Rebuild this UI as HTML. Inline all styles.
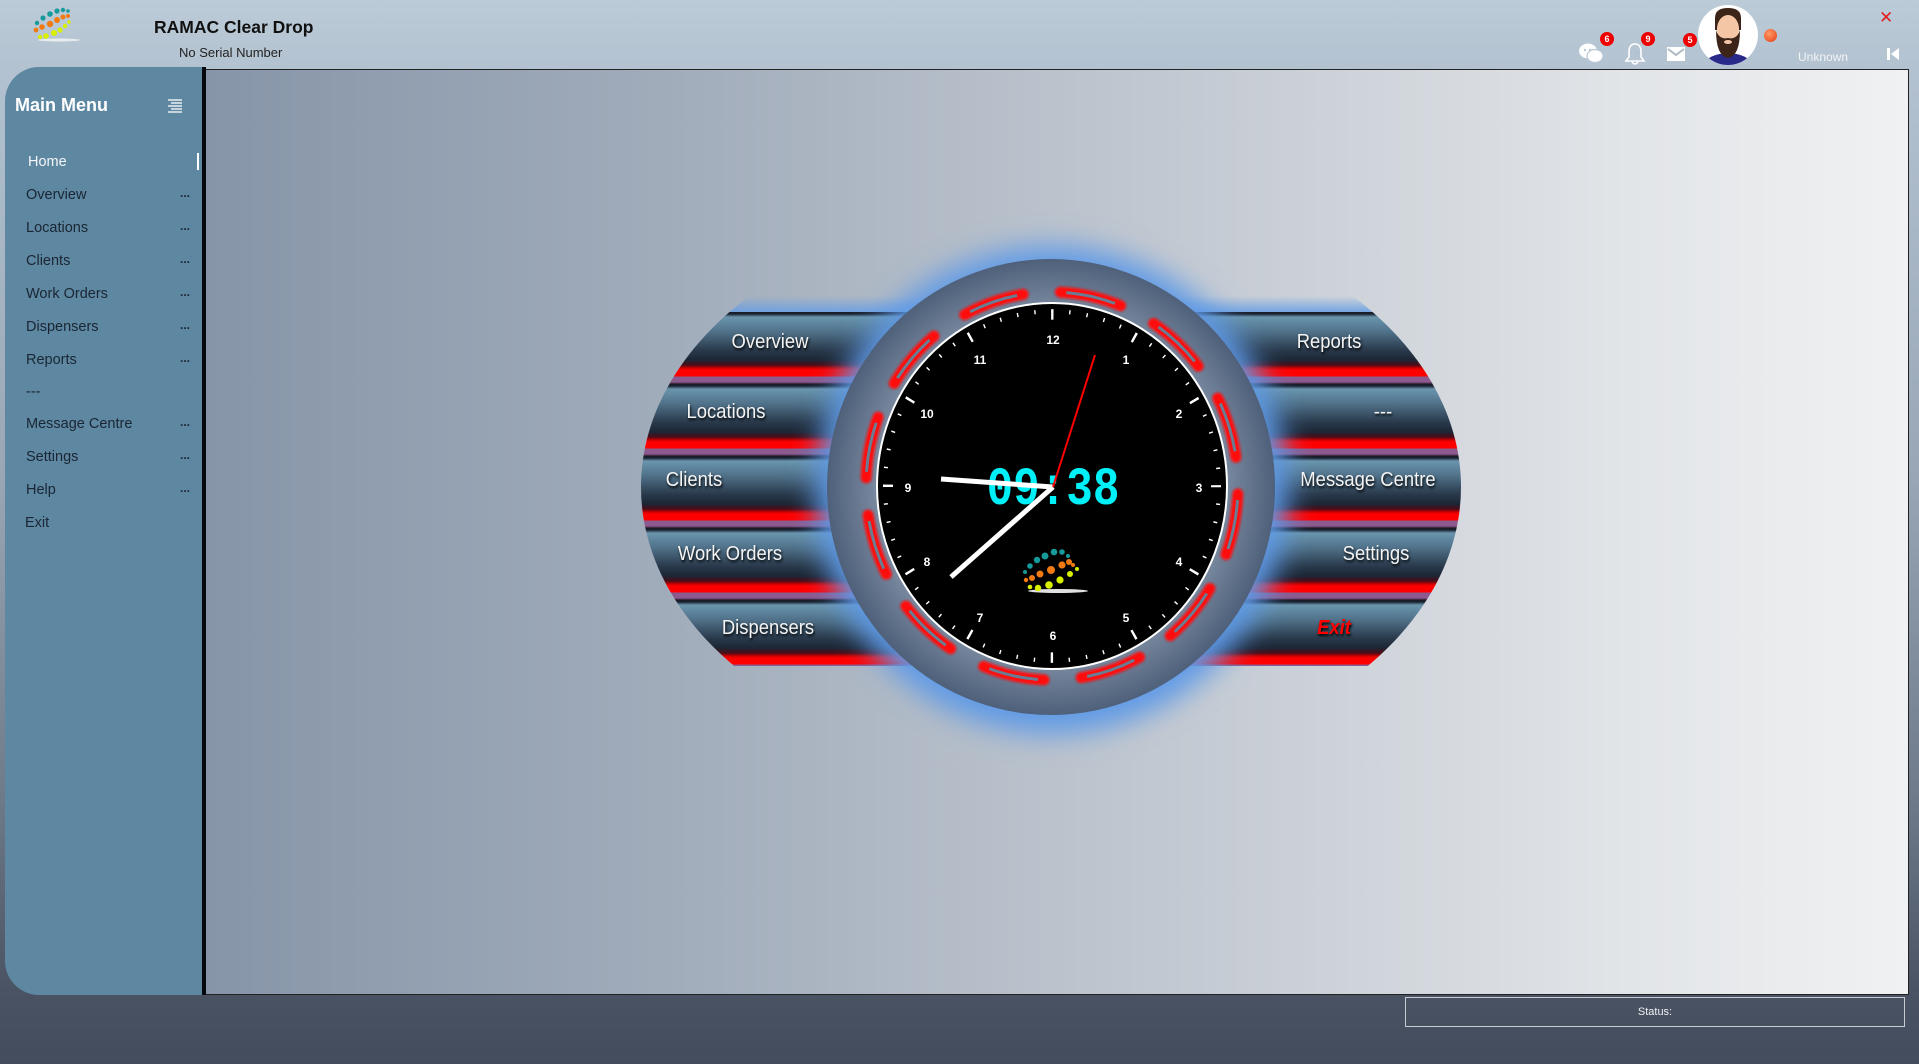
<!DOCTYPE html>
<html><head><meta charset="utf-8"><style>
*{margin:0;padding:0;box-sizing:border-box}
body{width:1919px;height:1064px;overflow:hidden;position:relative;font-family:"Liberation Sans",sans-serif;
background:linear-gradient(180deg,#bccbd8 0px,#b3c2d0 70px,#98a6b6 480px,#6e7a8a 800px,#4a5364 990px,#434c5d 1064px)}
.abs{position:absolute}
#side{left:5px;top:67px;width:201px;height:928px;background:#5e87a2;border-radius:34px 0 0 34px;border-right:4px solid #05080c}
#content{left:206px;top:69px;width:1703px;height:926px;border:1px solid #222;border-left:none;
background:linear-gradient(90deg,#8695a8 0%,#a4afbd 30%,#c6ccd4 60%,#e3e6e9 85%,#f0f1f2 100%)}
.mi{position:absolute;left:26px;font-size:14.5px;color:#1a2633}
.dots{position:absolute;left:180px;font-size:12px;color:#1a2633;font-weight:bold}
.band{position:absolute;left:600px;width:900px;height:72px;
background:linear-gradient(180deg,#161c28 0px,#1c2330 2px,#6a95ad 5px,#4f7088 20px,#2a3a4c 38px,#1c2634 48px,#4a0d18 53px,#c00 56px,#ff0000 58px,#ff0000 64px,#8c5a8e 65px,#8c5a8e 70px,#2a1a28 72px)}
.bt{position:absolute;color:#f4f4f4;font-size:20.5px;text-shadow:1px 2px 3px #000;transform:translateX(-50%) scaleX(.9);white-space:nowrap}
.badge{position:absolute;width:14px;height:14px;border-radius:7px;background:#e00;color:#fff;font-size:9px;font-weight:bold;text-align:center;line-height:14px}
</style></head><body>

<svg class="abs" style="left:28px;top:6px" width="56" height="40" viewBox="28 6 56 40">
<ellipse cx="59" cy="40" rx="21" ry="1.5" fill="#e8ecef"/>
<g fill="#169a9a"><circle cx="37" cy="23" r="2.2"/><circle cx="43" cy="18" r="2.6"/><circle cx="50" cy="14" r="2.8"/><circle cx="57" cy="11" r="2.6"/><circle cx="63" cy="10" r="2.2"/><circle cx="68" cy="11" r="1.8"/></g>
<g fill="#f27a12"><circle cx="36" cy="30" r="2.4"/><circle cx="42" cy="27" r="2.8"/><circle cx="50" cy="24" r="3.2"/><circle cx="57" cy="20" r="3"/><circle cx="63" cy="17" r="2.5"/><circle cx="68" cy="16" r="2"/></g>
<g fill="#d8f000"><circle cx="40" cy="37" r="2.2"/><circle cx="46" cy="36" r="2.8"/><circle cx="54" cy="33" r="3"/><circle cx="60" cy="30" r="2.6"/><circle cx="65" cy="26" r="2.2"/><circle cx="69" cy="22" r="1.7"/></g>
</svg>
<div class="abs" style="left:154px;top:17px;font-size:17.5px;font-weight:bold;color:#111">RAMAC Clear Drop</div>
<div class="abs" style="left:179px;top:45px;font-size:13px;color:#222">No Serial Number</div>

<svg class="abs" style="left:1578px;top:42px" width="28" height="24" viewBox="0 0 28 24">
<ellipse cx="10" cy="9" rx="9" ry="7.5" fill="#fff"/><ellipse cx="17" cy="14" rx="8" ry="6.5" fill="#fff" stroke="#b9c8d6" stroke-width="1.2"/>
<circle cx="7" cy="8" r="1.2" fill="#b9c8d6"/><circle cx="12" cy="8" r="1.2" fill="#b9c8d6"/></svg>
<div class="badge" style="left:1600px;top:32px">6</div>
<svg class="abs" style="left:1624px;top:42px" width="22" height="24" viewBox="0 0 22 24"><path d="M11 2 C6 2 5 6 5 10 L5 15 L2 19 L20 19 L17 15 L17 10 C17 6 16 2 11 2 Z" fill="none" stroke="#fff" stroke-width="1.6"/><path d="M8 20 Q11 24 14 20" fill="none" stroke="#fff" stroke-width="1.5"/></svg>
<div class="badge" style="left:1641px;top:32px">9</div>
<svg class="abs" style="left:1666px;top:46px" width="20" height="16" viewBox="0 0 20 16"><rect x="1" y="1" width="18" height="14" fill="#fff"/><path d="M2 3 L10 9 L18 3" fill="none" stroke="#aab6c2" stroke-width="1.8"/></svg>
<div class="badge" style="left:1683px;top:33px">5</div>
<svg class="abs" style="left:1697px;top:4px" width="62" height="62" viewBox="0 0 62 62">
<defs><clipPath id="av"><circle cx="31" cy="31" r="30"/></clipPath></defs>
<circle cx="31" cy="31" r="30" fill="#fff"/>
<g clip-path="url(#av)">
<path d="M6 62 Q10 50 31 49 Q52 50 56 62 Z" fill="#2a2a8a"/>
<path d="M18 14 Q18 4 31 4 Q44 4 44 14 L44 26 L18 26 Z" fill="#3d2418"/>
<ellipse cx="31" cy="25" rx="11" ry="14" fill="#f4c6a6"/>
<path d="M19 26 Q19 52 31 54 Q43 52 43 26 Q40 36 31 34 Q22 36 19 26 Z" fill="#3d2418"/>
<ellipse cx="31" cy="38" rx="4" ry="2" fill="#f4c6a6"/>
<path d="M19 12 Q25 8 31 10 Q37 8 43 12 L43 9 Q31 1 19 9 Z" fill="#3d2418"/>
</g></svg>
<div class="abs" style="left:1764px;top:29px;width:13px;height:13px;border-radius:50%;background:radial-gradient(circle at 40% 35%,#ff9a66,#e53a10)"></div>
<div class="abs" style="left:1798px;top:50px;font-size:12px;color:#f2f4f6">Unknown</div>
<div class="abs" style="left:1879px;top:8px;font-size:17px;color:#e02020">✕</div>
<svg class="abs" style="left:1886px;top:47px" width="14" height="14" viewBox="0 0 14 14"><rect x="1" y="1" width="3" height="12" fill="#fff"/><path d="M13 1 L5 7 L13 13 Z" fill="#fff"/></svg>

<div id="side" class="abs">
<div class="abs" style="left:10px;top:28px;font-size:18px;font-weight:bold;color:#fff">Main Menu</div>
<svg class="abs" style="left:162px;top:31px" width="16" height="16" viewBox="0 0 16 16"><g stroke="#fff" stroke-width="1.3"><line x1="1" y1="2" x2="15" y2="2"/><line x1="4" y1="5" x2="15" y2="5"/><line x1="1" y1="8" x2="15" y2="8"/><line x1="4" y1="11" x2="15" y2="11"/><line x1="1" y1="14" x2="15" y2="14"/></g></svg>
<div class="abs" style="left:192px;top:86px;width:2px;height:17px;background:#fff"></div>
</div>
<div class="mi" style="left:28px;top:154px;color:#f4f6f8">Home</div>
<div class="mi" style="top:187px">Overview</div><div class="dots" style="top:186px">...</div>
<div class="mi" style="top:220px">Locations</div><div class="dots" style="top:219px">...</div>
<div class="mi" style="top:253px">Clients</div><div class="dots" style="top:252px">...</div>
<div class="mi" style="top:286px">Work Orders</div><div class="dots" style="top:285px">...</div>
<div class="mi" style="top:319px">Dispensers</div><div class="dots" style="top:318px">...</div>
<div class="mi" style="top:352px">Reports</div><div class="dots" style="top:351px">...</div>
<div class="mi" style="top:384px">---</div>
<div class="mi" style="top:416px">Message Centre</div><div class="dots" style="top:415px">...</div>
<div class="mi" style="top:449px">Settings</div><div class="dots" style="top:448px">...</div>
<div class="mi" style="top:482px">Help</div><div class="dots" style="top:481px">...</div>
<div class="mi" style="top:515px;left:25px">Exit</div>

<div id="content" class="abs"></div>

<div class="abs" style="left:0;top:0;width:1919px;height:1064px;clip-path:ellipse(410px 282px at 1051px 487px)">
<div class="abs" style="left:600px;top:296px;width:900px;height:18px;background:linear-gradient(180deg,rgba(110,160,230,0),#6a9fe2)"></div>
<div class="band" style="top:312px"></div>
<div class="band" style="top:384px"></div>
<div class="band" style="top:456px"></div>
<div class="band" style="top:528px"></div>
<div class="band" style="top:600px;height:66px"></div>
</div>

<svg class="abs" style="left:600px;top:200px" width="900" height="580" viewBox="600 200 900 580">
<defs>
<filter id="bl" x="-30%" y="-30%" width="160%" height="160%"><feGaussianBlur stdDeviation="14"/></filter>
<filter id="rb" x="-10%" y="-10%" width="120%" height="120%"><feGaussianBlur stdDeviation="1.2"/></filter>
<radialGradient id="og" cx="50%" cy="50%" r="50%"><stop offset="0" stop-color="#9aaabd"/><stop offset=".75" stop-color="#7d8ea4"/><stop offset="1" stop-color="#4f607a"/></radialGradient>
</defs>
<ellipse cx="1052" cy="490" rx="236" ry="244" fill="#5f9ae6" filter="url(#bl)"/>
<ellipse cx="1051" cy="487" rx="224" ry="228" fill="url(#og)"/>
<ellipse cx="1052" cy="486" rx="186" ry="194" fill="none" stroke="#ff1010" stroke-width="11" stroke-dasharray="62 37.5" stroke-dashoffset="-8" stroke-linecap="round" filter="url(#rb)"/>
<ellipse cx="1052" cy="486" rx="186" ry="194" fill="none" stroke="#6b7c92" stroke-width="3" stroke-dasharray="50 49.5" stroke-dashoffset="-14"/>
<ellipse cx="1052" cy="486" rx="175" ry="183" fill="#000" stroke="#fff" stroke-width="2"/>
<g transform="translate(1052 486) scale(1 1.046)">
<circle r="167" fill="none" stroke="#fff" stroke-width="4" stroke-dasharray="1.4 16.09" stroke-dashoffset="0.7"/>
<circle r="164" fill="none" stroke="#fff" stroke-width="10" stroke-dasharray="2.4 83.47" stroke-dashoffset="1.2"/>
</g>
<g fill="#fff" font-family="Liberation Sans" font-weight="bold" font-size="12" text-anchor="middle">
<text x="1053" y="344">12</text><text x="1126" y="364">1</text><text x="1179" y="418">2</text><text x="1199" y="492">3</text>
<text x="1179" y="566">4</text><text x="1126" y="622">5</text><text x="1053" y="640">6</text><text x="980" y="622">7</text>
<text x="927" y="566">8</text><text x="908" y="492">9</text><text x="927" y="418">10</text><text x="980" y="364">11</text>
</g>
<text x="1053" y="504" fill="#00f0f8" font-family="Liberation Mono" font-weight="bold" font-size="54" text-anchor="middle" transform="translate(1053 0) scale(.82 1) translate(-1053 0)">09:38</text>
<ellipse cx="1058" cy="591" rx="30" ry="2" fill="#e0e0e0"/>
<g fill="#169a9a"><circle cx="1025" cy="572" r="2"/><circle cx="1030" cy="566" r="2.8"/><circle cx="1037" cy="560" r="3.2"/><circle cx="1045" cy="556" r="3.5"/><circle cx="1054" cy="552" r="3.3"/><circle cx="1062" cy="552" r="2.8"/><circle cx="1068" cy="556" r="2"/></g>
<g fill="#f27a12"><circle cx="1026" cy="580" r="2.2"/><circle cx="1032" cy="578" r="3"/><circle cx="1040" cy="574" r="3.5"/><circle cx="1051" cy="570" r="4"/><circle cx="1062" cy="565" r="3.6"/><circle cx="1069" cy="562" r="3"/><circle cx="1073" cy="565" r="2"/></g>
<g fill="#d8f000"><circle cx="1030" cy="587" r="2.3"/><circle cx="1038" cy="588" r="3.2"/><circle cx="1049" cy="585" r="3.8"/><circle cx="1060" cy="580" r="3.6"/><circle cx="1070" cy="574" r="3"/><circle cx="1077" cy="569" r="2"/></g>
<line x1="1053" y1="487" x2="941" y2="479" stroke="#fff" stroke-width="5"/>
<line x1="1053" y1="487" x2="951" y2="577" stroke="#fff" stroke-width="5"/>
<line x1="1053" y1="487" x2="1095" y2="355" stroke="#f00" stroke-width="2"/>
</svg>

<div class="bt" style="left:770px;top:330px">Overview</div>
<div class="bt" style="left:726px;top:400px">Locations</div>
<div class="bt" style="left:694px;top:468px">Clients</div>
<div class="bt" style="left:730px;top:542px">Work Orders</div>
<div class="bt" style="left:768px;top:616px">Dispensers</div>
<div class="bt" style="left:1329px;top:330px">Reports</div>
<div class="bt" style="left:1383px;top:400px">---</div>
<div class="bt" style="left:1368px;top:468px">Message Centre</div>
<div class="bt" style="left:1376px;top:542px">Settings</div>
<div class="bt" style="left:1334px;top:616px;color:#f00;font-weight:bold;font-style:italic">Exit</div>

<div class="abs" style="left:1405px;top:997px;width:500px;height:30px;border:1px solid #c8ccd2;color:#eef0f2;font-size:11px;text-align:center;line-height:28px">Status:</div>
</body></html>
